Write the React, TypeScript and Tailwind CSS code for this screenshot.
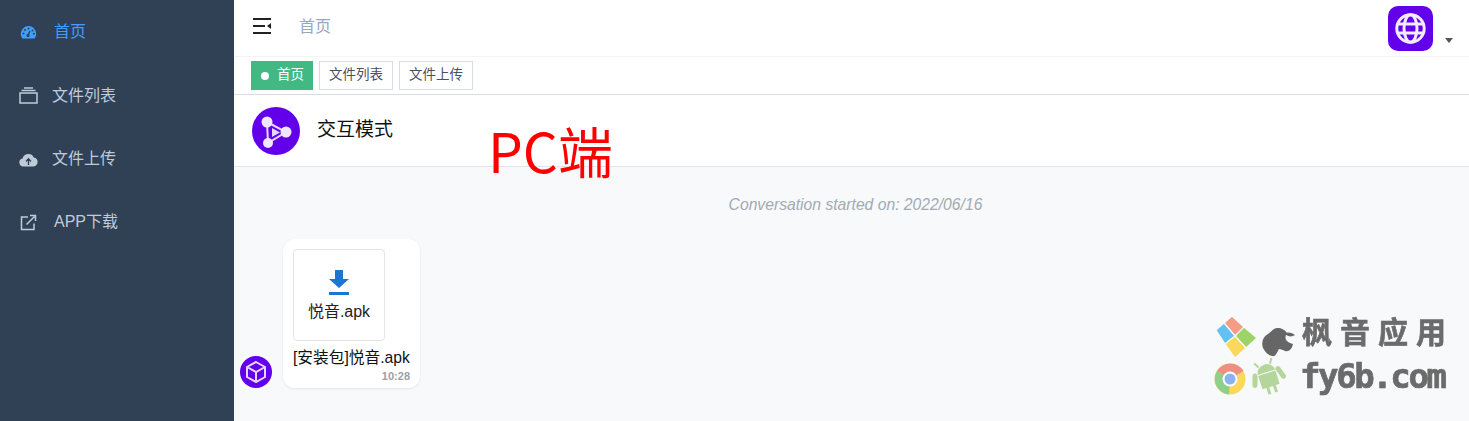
import React from "react";

const font = { fontFamily: '"Liberation Sans", "Noto Sans CJK SC", sans-serif' };

function MenuItem({ icon, label, active, gap }: { icon: React.ReactNode; label: string; active?: boolean; gap: string }) {
  return (
    <div className={`flex h-[63.3px] items-center pl-[19px] text-[16px] ${gap} ${active ? "text-[#409eff]" : "text-[#bfcbd9]"}`}>
      <span className="flex h-[18px] w-[19px] shrink-0 items-center justify-center">{icon}</span>
      <span>{label}</span>
    </div>
  );
}

function Tag({ label, active }: { label: string; active?: boolean }) {
  return (
    <div className={`flex h-[29px] items-center border text-[13.5px] ${active ? "border-[#42b983] bg-[#42b983] pl-[9px] pr-[8px] text-white" : "border-[#d8dce5] bg-white px-[9px] text-[#495060]"}`}>
      {active && <span className="mr-[8px] h-[8px] w-[8px] rounded-full bg-white" />}
      {label}
    </div>
  );
}

function Watermark() {
  return (
    <div className="pointer-events-none absolute left-[1214px] top-[316px] h-[82px] w-[236px] text-[#6b6b6b] blur-[0.3px]">
      <div className="flex items-start">
        <svg width="42" height="43" viewBox="0 0 42 43" className="ml-[2px] shrink-0" stroke="#f7f9fb" strokeWidth="1.2">
          <path d="M16 0 L28 11 L19 20 L8 7 Z" fill="#f59c85" />
          <path d="M8 7 L19 20 L9 28 L0 14 Z" fill="#63c0f0" />
          <path d="M28 11 L41 22 L30 32 L19 20 Z" fill="#9ed36a" />
          <path d="M19 20 L30 32 L19 42 L9 28 Z" fill="#fbd75c" />
        </svg>
        <svg width="34" height="29" viewBox="0 0 34 29" className="ml-[4px] mt-[12px] shrink-0" fill="#666">
          <path d="M15 0 C20 0 23 2 25 5 C23 8 23 11 25 13 C27 15 29 15 31 16 C30 21 27 24 23 23 C21 22 19 21 17 21 C15 24 14 29 10 28 C6 27 3 24 1 20 C-1 14 1 9 6 6 C9 4 12 0 15 0 Z" />
          <path d="M23 6 C26 3 30 5 33 7 C30 9 26 9 23 6 Z" />
        </svg>
        <div className="ml-[6px] mt-[-2px] whitespace-nowrap text-[30px] font-bold leading-[38px] tracking-[8px] [-webkit-text-stroke:0.6px_#6b6b6b]">枫音应用</div>
      </div>
      <div className="-mt-[1px] flex items-start">
        <svg width="32" height="32" viewBox="0 0 32 32" className="mt-[5px] shrink-0">
          <circle cx="16" cy="16" r="15.5" fill="#fbd75c" />
          <path d="M16 16 L3 8 A15.5 15.5 0 0 1 29.5 8 Z" fill="#ef8f83" />
          <path d="M16 16 L3 8 A15.5 15.5 0 0 0 15 31.5 Z" fill="#8fcf8a" />
          <circle cx="16" cy="16" r="7.5" fill="#fff" />
          <circle cx="16" cy="16" r="5.5" fill="#8bb4ee" />
        </svg>
        <svg width="38" height="38" viewBox="0 0 38 38" className="ml-[3px] shrink-0">
          <g transform="rotate(-18 19 19)">
            <path d="M10 14 A9 8 0 0 1 28 14 Z" fill="#b4d69b" />
            <path d="M13 7 L10 2 M25 7 L28 2" stroke="#b4d69b" strokeWidth="2" />
            <path d="M10 15 H28 V29 H24 V36 H21 V29 H17 V36 H14 V29 H10 Z" fill="#b4d69b" />
            <path d="M7 14 L4 23 M31 14 L34 23" stroke="#b4d69b" strokeWidth="5" strokeLinecap="round" />
          </g>
        </svg>
        <div className="ml-[13px] -mt-[2px] whitespace-nowrap text-[34px] font-bold leading-[40px] tracking-[-2.4px] [-webkit-text-stroke:0.7px_#6b6b6b]" style={{ fontFamily: '"DejaVu Sans Mono", monospace' }}>
          fy6b.com
        </div>
      </div>
    </div>
  );
}

export default function App() {
  return (
    <div className="relative flex h-[421px] w-[1469px] overflow-hidden bg-white" style={font}>
      <aside className="h-full w-[234px] shrink-0 bg-[#304156] pt-[0.8px]">
        <MenuItem
          active
          gap="gap-[16px]"
          label="首页"
          icon={
            <svg width="17" height="14" viewBox="0 0 17 14">
              <path d="M8.5 1 A8 8 0 0 0 2.3 13.5 H14.7 A8 8 0 0 0 8.5 1 Z" fill="#409eff" />
              <circle cx="5" cy="5" r="1" fill="#304156" />
              <circle cx="8.5" cy="3.6" r="1" fill="#304156" />
              <circle cx="12.5" cy="5.5" r="1" fill="#304156" />
              <circle cx="3.5" cy="8.6" r="1" fill="#304156" />
              <circle cx="13.8" cy="8.8" r="1" fill="#304156" />
              <path d="M8 10 L10 6" stroke="#304156" strokeWidth="1.4" />
              <circle cx="8" cy="10.5" r="1.6" fill="#304156" />
            </svg>
          }
        />
        <MenuItem
          gap="gap-[14px]"
          label="文件列表"
          icon={
            <svg width="19" height="17" viewBox="0 0 19 17" fill="none" stroke="#bfcbd9" strokeWidth="1.5">
              <rect x="1" y="6" width="17" height="10" />
              <path d="M2.5 3.5 H16.5" />
              <path d="M5 1 H14" />
            </svg>
          }
        />
        <MenuItem
          gap="gap-[14px]"
          label="文件上传"
          icon={
            <svg width="19" height="15" viewBox="0 0 19 15">
              <path d="M4.5 14.5 A4 4 0 0 1 3.5 6.6 A6 6 0 0 1 14.8 5.4 A4.6 4.6 0 0 1 14.5 14.5 Z" fill="#bfcbd9" />
              <path d="M9.5 13 V7.5 M7 9.5 L9.5 6.8 L12 9.5" stroke="#304156" strokeWidth="1.4" fill="none" />
            </svg>
          }
        />
        <MenuItem
          gap="gap-[16px]"
          label="APP下载"
          icon={
            <svg width="17" height="17" viewBox="0 0 17 17" fill="none" stroke="#bfcbd9" strokeWidth="1.5">
              <path d="M8 3 H1.5 V15.5 H14 V9.5" />
              <path d="M6.5 10.5 L14.5 2.5 M10 1.5 H15.5 V7" />
            </svg>
          }
        />
      </aside>

      <main className="flex min-w-0 flex-1 flex-col">
        <header className="flex h-[57px] items-center border-b border-[#f2f4f6] pl-[19px] pr-[15px]">
          <svg width="19" height="18" viewBox="0 0 19 18" className="-mt-[4px]">
            <path d="M0 2 H18 M0 16 H18 M0 9 H12" stroke="#222" strokeWidth="2.2" />
            <path d="M18 6 L14 9 L18 12 Z" fill="#222" />
          </svg>
          <span className="ml-[27px] -mt-[2px] text-[16px] text-[#97a8be]">首页</span>
          <div className="ml-auto flex items-start">
            <div className="flex h-[45px] w-[45px] items-center justify-center rounded-[10px] bg-[#6200ea]">
              <svg width="31" height="31" viewBox="0 0 31 31" fill="none" stroke="#f3ecfe" strokeWidth="3">
                <circle cx="15.5" cy="15.5" r="13.7" />
                <ellipse cx="15.5" cy="15.5" rx="6.5" ry="13.7" />
                <path d="M2 11 H29 M2 20 H29" />
              </svg>
            </div>
            <span className="ml-[12px] mr-[1px] mt-[32px] h-0 w-0 border-x-[4.5px] border-t-[5px] border-x-transparent border-t-[#555]" />
          </div>
        </header>

        <div className="flex h-[38px] items-center gap-[6px] border-b border-[#d8dce5] pl-[17px]">
          <Tag active label="首页" />
          <Tag label="文件列表" />
          <Tag label="文件上传" />
        </div>

        <div className="flex h-[72px] items-center border-b border-[#e2e6ea] pl-[18px]">
          <div className="flex h-[48px] w-[48px] items-center justify-center rounded-full bg-[#6200ea]">
            <svg width="34" height="34" viewBox="0 0 34 34">
              <path d="M8 8 L27 18 L9 29 Z" fill="none" stroke="#e6d6fb" strokeWidth="2" />
              <path d="M13 14 L21 18.5 L13 23 Z" fill="#e6d6fb" />
              <circle cx="8" cy="8" r="5.5" fill="#f0e7fd" />
              <circle cx="27" cy="18" r="5.5" fill="#f0e7fd" />
              <circle cx="9" cy="29" r="5" fill="#f0e7fd" />
            </svg>
          </div>
          <span className="ml-[17px] text-[19px] text-[#111]">交互模式</span>
        </div>

        <section className="flex-1 bg-[#f7f9fb] px-[6px]">
          <p className="mt-[29px] pl-[8px] text-center text-[15.7px] italic leading-[18px] text-[#a3aab2]">Conversation started on: 2022/06/16</p>
          <div className="mt-[25px] flex items-end">
            <svg width="32" height="32" viewBox="0 0 32 32" className="shrink-0">
              <circle cx="16" cy="16" r="16" fill="#6200ea" />
              <path d="M16 6 L25 11 V21 L16 26 L7 21 V11 Z M7 11 L16 16 L25 11 M16 16 V26" fill="none" stroke="#e6d6fb" strokeWidth="2" />
            </svg>
            <div className="ml-[11px] w-[137px] rounded-[12px] bg-white pl-[10px] pt-[10px] shadow-[0_1px_3px_rgba(0,0,0,0.08)]">
              <div className="flex h-[92px] w-[92px] flex-col items-center rounded-[4px] border border-[#e4e4e4] bg-white">
                <svg width="22" height="26" viewBox="0 0 22 26" className="mt-[20px]">
                  <path d="M7 0 H15 V9 H21 L11 18 L1 9 H7 Z" fill="#1976d2" />
                  <rect x="1" y="22" width="20" height="3" fill="#1976d2" />
                </svg>
                <span className="mt-[6px] text-[16px] leading-[20px] text-[#222]">悦音.apk</span>
              </div>
              <p className="mt-[8px] whitespace-nowrap text-[15.7px] leading-[18px] text-[#111]">[安装包]悦音.apk</p>
              <p className="mr-[10px] mt-[2px] pb-[5px] text-right text-[11px] font-bold leading-[14px] text-[#a0a0a0]">10:28</p>
            </div>
          </div>
        </section>
      </main>

      <div className="pointer-events-none absolute left-[488px] top-[113px] whitespace-nowrap text-[55px] leading-[72px] text-[#ff0000]" style={{ fontFamily: '"Noto Sans CJK SC", "Liberation Sans", sans-serif' }}>
        PC端
      </div>
      <Watermark />
    </div>
  );
}
